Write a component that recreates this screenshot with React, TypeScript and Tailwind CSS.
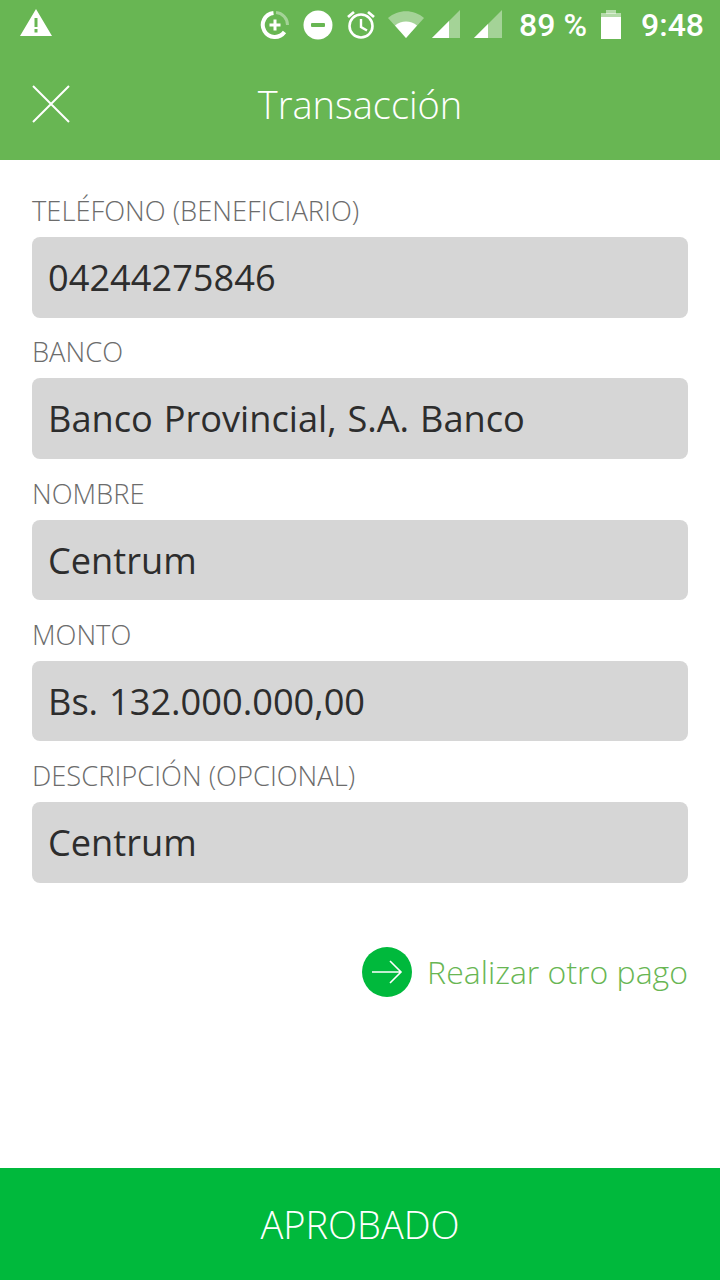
const fields = [
  { label: "TELÉFONO (BENEFICIARIO)", value: "04244275846" },
  { label: "BANCO", value: "Banco Provincial, S.A. Banco" },
  { label: "NOMBRE", value: "Centrum" },
  { label: "MONTO", value: "Bs. 132.000.000,00" },
  { label: "DESCRIPCIÓN (OPCIONAL)", value: "Centrum" },
];

function StatusIcons() {
  return (
    <div className="flex items-center">
      <svg width="30" height="30" viewBox="0 0 30 30">
        <path d="M16 2.5a12.5 12.5 0 0 1 11.5 12.5" fill="none" stroke="white" strokeOpacity="0.4" strokeWidth="3" />
        <path d="M13.5 3a12 12 0 1 0 11 19" fill="none" stroke="white" strokeWidth="4" />
        <path d="M15 9.5v11M9.5 15h11" stroke="white" strokeWidth="3" />
      </svg>
      <svg width="30" height="30" viewBox="0 0 30 30" className="ml-[13px]">
        <circle cx="15" cy="15" r="14.5" fill="white" />
        <rect x="8" y="13" width="14" height="4" rx="1" fill="#68b653" />
      </svg>
      <svg width="30" height="32" viewBox="0 0 30 32" className="ml-[13px]">
        <circle cx="15" cy="17" r="11.5" fill="none" stroke="white" strokeWidth="2.6" />
        <path d="M15 10v8l6 3.5" fill="none" stroke="white" strokeWidth="2.4" />
        <path d="M2 8l6-5M28 8l-6-5" stroke="white" strokeWidth="2.8" />
      </svg>
      <svg width="36" height="30" viewBox="0 0 36 30" className="ml-[12px]">
        <path d="M0 8C10 -1 26 -1 36 8L18 28Z" fill="white" fillOpacity="0.4" />
        <path d="M7 15.5C13 10 23 10 29 15.5L18 28Z" fill="white" />
      </svg>
      <svg width="30" height="30" viewBox="0 0 30 30" className="ml-[8px]">
        <path d="M28 0V28H0Z" fill="white" fillOpacity="0.4" />
        <path d="M17 11V28H0Z" fill="white" />
      </svg>
      <svg width="30" height="30" viewBox="0 0 30 30" className="ml-[12px]">
        <path d="M28 0V28H0Z" fill="white" fillOpacity="0.4" />
        <path d="M14 14V28H0Z" fill="white" />
      </svg>
    </div>
  );
}

export default function App() {
  return (
    <div className="flex h-[1280px] w-[720px] flex-col overflow-hidden bg-white font-['Open_Sans',sans-serif]">
      <header className="h-[160px] shrink-0 bg-[#68b653] text-white">
        <div className="flex h-[48px] items-center justify-between pl-[20px] pr-[16px]">
          <svg width="32" height="28" viewBox="0 0 32 28" className="mb-[2px]">
            <path fillRule="evenodd" d="M16 0L32 27H0ZM14.5 9v9h3V9ZM14.5 20v3.5h3V20Z" fill="white" />
          </svg>
          <div className="flex items-center pt-[1px]">
            <StatusIcons />
            <span className="ml-[15px] font-['Roboto',sans-serif] text-[32px] font-medium leading-none whitespace-pre">89 %</span>
            <svg width="20" height="30" viewBox="0 0 20 30" className="ml-[14px]">
              <rect x="5" y="0" width="10" height="4" fill="white" fillOpacity="0.5" />
              <rect x="0" y="3" width="20" height="6" fill="white" fillOpacity="0.5" />
              <rect x="0" y="7" width="20" height="22" fill="white" />
            </svg>
            <span className="ml-[20px] font-['Roboto',sans-serif] text-[32px] font-medium leading-none">9:48</span>
          </div>
        </div>
        <div className="relative flex h-[112px] items-center justify-center">
          <svg width="38" height="38" viewBox="0 0 38 38" className="absolute left-[32px] top-[37px]">
            <path d="M1 1L37 37M37 1L1 37" stroke="white" strokeWidth="2" fill="none" />
          </svg>
          <h1 className="text-[38px] font-light leading-none">Transacción</h1>
        </div>
      </header>
      <main className="flex flex-1 flex-col px-[32px] pt-[16.25px]">
        {fields.map((f) => (
          <div key={f.label + f.value}>
            <div className="flex h-[60.75px] items-end pb-[8px] text-[27.3px] font-light leading-[36px] text-[#6c6c6c]">{f.label}</div>
            <div className="flex h-[80.5px] items-center rounded-[8px] bg-[#d6d6d6] pl-[16px] text-[36.2px] leading-none text-[#2d2d2d] [word-spacing:1.5px]">{f.value}</div>
          </div>
        ))}
        <div className="mt-[64px] flex items-center justify-end">
          <div className="flex h-[50px] w-[50px] items-center justify-center rounded-full bg-[#00b93c]">
            <svg width="32" height="26" viewBox="0 0 32 26">
              <path d="M1 13H30M19 2L30 13L19 24" stroke="white" strokeWidth="1.6" fill="none" />
            </svg>
          </div>
          <span className="ml-[15px] text-[32px] font-light leading-none text-[#68b653]">Realizar otro pago</span>
        </div>
      </main>
      <footer className="flex h-[112px] shrink-0 items-center justify-center bg-[#00b93c] text-[38px] font-light leading-none text-white">APROBADO</footer>
    </div>
  );
}
